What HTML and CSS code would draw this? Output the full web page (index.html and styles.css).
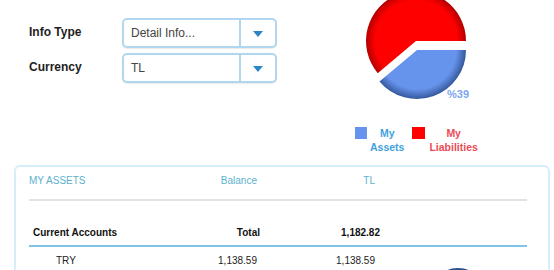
FILE: index.html
```html
<!DOCTYPE html>
<html lang="en">
<head>
  <meta charset="UTF-8">
  <title>My Assets</title>
  <link rel="stylesheet" href="styles.css">
</head>
<body>

  <div class="top">
    <form class="filters">
      <div class="filter-row">
        <label class="filter-label">Info Type</label>
        <div class="select">
          <span class="select-value">Detail Info...</span>
          <span class="select-btn"><span class="arrow"></span></span>
        </div>
      </div>
      <div class="filter-row">
        <label class="filter-label">Currency</label>
        <div class="select">
          <span class="select-value">TL</span>
          <span class="select-btn"><span class="arrow"></span></span>
        </div>
      </div>
    </form>

    <div class="chart">
      <svg class="pie" width="125" height="105" viewBox="355 0 125 105">
        <defs>
          <radialGradient id="g-red" gradientUnits="userSpaceOnUse" cx="416" cy="41" r="50">
            <stop offset="0" stop-color="#ff0000"/>
            <stop offset="0.82" stop-color="#ff0000"/>
            <stop offset="1" stop-color="#b30000"/>
          </radialGradient>
          <radialGradient id="g-blue" gradientUnits="userSpaceOnUse" cx="417" cy="50" r="49">
            <stop offset="0" stop-color="#6694ec"/>
            <stop offset="0.8" stop-color="#6694ec"/>
            <stop offset="1" stop-color="#35589c"/>
          </radialGradient>
        </defs>
        <path d="M416 41 L377.7 73.14 A50 50 0 1 1 466 41 Z" fill="url(#g-red)"/>
        <path d="M417 50 L466 50 A49 49 0 0 1 379.46 81.5 Z" fill="url(#g-blue)"/>
        <text x="447" y="98" class="pie-label">%39</text>
      </svg>

      <div class="legend">
        <div class="legend-item">
          <span class="swatch swatch-assets"></span>
          <span class="legend-text assets">My<br>Assets</span>
        </div>
        <div class="legend-item">
          <span class="swatch swatch-liab"></span>
          <span class="legend-text liab">My<br>Liabilities</span>
        </div>
      </div>
    </div>
  </div>

  <div class="panel">
    <div class="grid panel-head">
      <span>MY ASSETS</span>
      <span class="num">Balance</span>
      <span class="num">TL</span>
    </div>

    <div class="grid group-head">
      <span class="group-name">Current Accounts</span>
      <span class="num total-label">Total</span>
      <span class="num total-value">1,182.82</span>
    </div>

    <div class="group-body">
      <div class="rows">
        <div class="grid row">
          <span class="code">TRY</span>
          <span class="num">1,138.59</span>
          <span class="num">1,138.59</span>
        </div>
        <div class="grid row">
          <span class="code">XAU</span>
          <span class="num">0.40</span>
          <span class="num">44.23</span>
        </div>
      </div>
      <svg class="mini-pie" width="60" height="60" viewBox="0 0 60 60">
        <defs>
          <radialGradient id="g-dark" cx="0.5" cy="0.5" r="0.5">
            <stop offset="0" stop-color="#3d6fb4"/>
            <stop offset="0.8" stop-color="#3d6fb4"/>
            <stop offset="1" stop-color="#254c8a"/>
          </radialGradient>
        </defs>
        <circle cx="30" cy="30" r="30" fill="url(#g-dark)"/>
      </svg>
    </div>
  </div>

</body>
</html>
```

FILE: styles.css
```css
* {
  box-sizing: border-box;
}

body {
  margin: 0;
  background: #fff;
  font-family: 'Liberation Sans', Arial, sans-serif;
  color: #222;
}

.top {
  display: flex;
  align-items: flex-start;
}

/* filters */

.filters {
  width: 277px;
  padding: 18px 0 0 29px;
  margin: 0;
  display: flex;
  flex-direction: column;
  gap: 5px;
}

.filter-row {
  display: flex;
  align-items: flex-start;
}

.filter-label {
  width: 93px;
  padding-top: 7px;
  font-size: 12px;
  line-height: 14px;
  font-weight: bold;
  color: #1e1e1e;
}

.select {
  width: 155px;
  height: 30px;
  display: flex;
  border: 2px solid #b1d7ee;
  border-radius: 5px;
  background: #fff;
  box-shadow: 0 1px 1px rgba(0, 0, 0, 0.08);
}

.select-value {
  flex: 1;
  display: flex;
  align-items: center;
  padding-left: 7px;
  font-size: 12px;
  line-height: 14px;
  color: #444;
}

.select-btn {
  width: 36px;
  display: flex;
  align-items: center;
  justify-content: center;
  border-left: 2px solid #b1d7ee;
}

.arrow {
  width: 0;
  height: 0;
  border-left: 5px solid transparent;
  border-right: 5px solid transparent;
  border-top: 6px solid #2b86c8;
  margin-top: 1px;
}

/* chart */

.chart {
  margin-left: 78px;
  display: flex;
  flex-direction: column;
}

.pie {
  display: block;
}

.pie-label {
  font-family: 'Liberation Sans', Arial, sans-serif;
  font-size: 11px;
  font-weight: bold;
  fill: #7ea6ef;
}

.legend {
  display: flex;
  margin-top: 21px;
  gap: 8px;
}

.legend-item {
  display: flex;
  align-items: flex-start;
}

.swatch {
  width: 12px;
  height: 12px;
  margin-top: 1px;
}

.swatch-assets {
  background: #6694ec;
}

.swatch-liab {
  width: 13px;
  background: #ff0000;
}

.legend-text {
  margin-left: 3px;
  text-align: center;
  font-size: 10.5px;
  line-height: 14px;
  font-weight: bold;
}

.legend-text.assets {
  color: #3fa2dc;
}

.legend-text.liab {
  margin-left: 4px;
  color: #ea4b57;
}

/* assets panel */

.panel {
  margin: 11px 0 0 14px;
  width: 536px;
  min-height: 140px;
  border: 2px solid #d6eef9;
  border-radius: 6px;
  padding: 8px 21px 0 13px;
}

.grid {
  display: grid;
  grid-template-columns: 161px 67px 118px;
  font-size: 10px;
  line-height: 12px;
}

.num {
  text-align: right;
}

.panel-head {
  color: #5cb1cd;
  padding-bottom: 12px;
  border-bottom: 2px solid #dfe4e8;
}

.group-head {
  margin-top: 26px;
  padding-bottom: 6px;
  border-bottom: 2px solid #80c4e6;
  font-weight: bold;
  color: #111;
}

.group-name {
  padding-left: 4px;
}

.total-label {
  margin-right: -3px;
}

.total-value {
  margin-right: -5px;
}

.group-body {
  display: flex;
  align-items: flex-start;
  padding-top: 7px;
}

.rows {
  width: 346px;
}

.row {
  line-height: 14px;
  color: #222;
}

.code {
  padding-left: 27px;
}

.mini-pie {
  display: block;
  margin: 14px 0 0 53px;
}
```
